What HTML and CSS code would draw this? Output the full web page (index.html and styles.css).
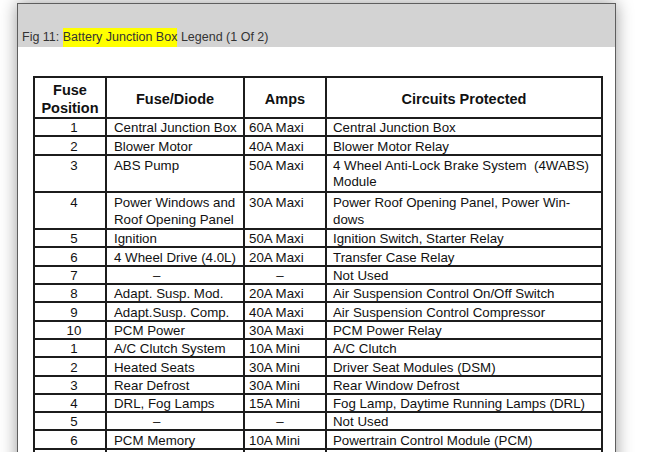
FILE: index.html
```html
<!DOCTYPE html>
<html>
<head>
<meta charset="utf-8">
<link rel="stylesheet" href="styles.css">
</head>
<body>
<div class="panel">
  <div class="caption"><span class="cap-text">Fig 11: <span class="hl">Battery Junction Box</span> Legend (1 Of 2)</span></div>
  <div class="content">
    <table class="legend">
      <colgroup>
        <col class="c-pos"><col class="c-fuse"><col class="c-amps"><col class="c-circ">
      </colgroup>
      <thead>
        <tr><th>Fuse<br>Position</th><th>Fuse/Diode</th><th>Amps</th><th>Circuits Protected</th></tr>
      </thead>
      <tbody>
        <tr><td class="pos">1</td><td class="fuse">Central Junction Box</td><td class="amps">60A Maxi</td><td class="circ">Central Junction Box</td></tr>
        <tr><td class="pos">2</td><td class="fuse">Blower Motor</td><td class="amps">40A Maxi</td><td class="circ">Blower Motor Relay</td></tr>
        <tr class="two"><td class="pos">3</td><td class="fuse">ABS Pump</td><td class="amps">50A Maxi</td><td class="circ">4 Wheel Anti-Lock Brake System &nbsp;(4WABS)<br>Module</td></tr>
        <tr class="two"><td class="pos">4</td><td class="fuse">Power Windows and<br>Roof Opening Panel</td><td class="amps">30A Maxi</td><td class="circ">Power Roof Opening Panel, Power Win-<br>dows</td></tr>
        <tr><td class="pos">5</td><td class="fuse">Ignition</td><td class="amps">50A Maxi</td><td class="circ">Ignition Switch, Starter Relay</td></tr>
        <tr><td class="pos">6</td><td class="fuse">4 Wheel Drive (4.0L)</td><td class="amps">20A Maxi</td><td class="circ">Transfer Case Relay</td></tr>
        <tr><td class="pos">7</td><td class="fuse dash-f">–</td><td class="amps dash-a">–</td><td class="circ">Not Used</td></tr>
        <tr><td class="pos">8</td><td class="fuse">Adapt. Susp. Mod.</td><td class="amps">20A Maxi</td><td class="circ">Air Suspension Control On/Off Switch</td></tr>
        <tr><td class="pos">9</td><td class="fuse">Adapt.Susp. Comp.</td><td class="amps">40A Maxi</td><td class="circ">Air Suspension Control Compressor</td></tr>
        <tr><td class="pos">10</td><td class="fuse">PCM Power</td><td class="amps">30A Maxi</td><td class="circ">PCM Power Relay</td></tr>
        <tr><td class="pos">1</td><td class="fuse">A/C Clutch System</td><td class="amps">10A Mini</td><td class="circ">A/C Clutch</td></tr>
        <tr><td class="pos">2</td><td class="fuse">Heated Seats</td><td class="amps">30A Mini</td><td class="circ">Driver Seat Modules (DSM)</td></tr>
        <tr><td class="pos">3</td><td class="fuse">Rear Defrost</td><td class="amps">30A Mini</td><td class="circ">Rear Window Defrost</td></tr>
        <tr><td class="pos">4</td><td class="fuse">DRL, Fog Lamps</td><td class="amps">15A Mini</td><td class="circ">Fog Lamp, Daytime Running Lamps (DRL)</td></tr>
        <tr><td class="pos">5</td><td class="fuse dash-f">–</td><td class="amps dash-a">–</td><td class="circ">Not Used</td></tr>
        <tr><td class="pos">6</td><td class="fuse">PCM Memory</td><td class="amps">10A Mini</td><td class="circ">Powertrain Control Module (PCM)</td></tr>
        <tr class="blank"><td class="pos"></td><td class="fuse"></td><td class="amps"></td><td class="circ"></td></tr>
      </tbody>
    </table>
  </div>
</div>
</body>
</html>
```
FILE: styles.css
```css
html, body {
  margin: 0;
  padding: 0;
  background: #ffffff;
  overflow: hidden;
  height: 452px;
}

.panel {
  margin: 3px 0 0 17px;
  width: 597px;
  height: 600px;
  border: 1px solid #5e5e5e;
  background: #ffffff;
  box-shadow: 0 0 16px rgba(0, 0, 0, 0.4);
}

.caption {
  height: 43px;
  background: #d3d3d3;
  display: flex;
  align-items: flex-end;
  padding-left: 4px;
}

.cap-text {
  font-family: "Liberation Sans", Arial, sans-serif;
  font-size: 12.5px;
  line-height: 19px;
  color: #333333;
  white-space: nowrap;
}

.hl {
  background: #ffff00;
  display: inline-block;
}

.content {
  padding: 29px 0 0 15px;
}

.legend {
  border-collapse: collapse;
  table-layout: fixed;
  width: 568px;
  font-family: "Liberation Sans", Arial, sans-serif;
  color: #111111;
}

.c-pos { width: 72px; }
.c-fuse { width: 138px; }
.c-amps { width: 82px; }
.c-circ { width: 276px; }

.legend th,
.legend td {
  border: 2px solid #1c1c1c;
  white-space: nowrap;
  overflow: hidden;
}

.legend th {
  font-size: 14.5px;
  font-weight: bold;
  line-height: 18px;
  padding: 3px 0 0;
  height: 36px;
  text-align: center;
  vertical-align: middle;
}

.legend td {
  font-size: 13.3px;
  line-height: 14px;
  padding: 2.3px 0 0;
  vertical-align: top;
}

.legend tr.two td {
  line-height: 16.5px;
}

.legend tr.blank td {
  height: 14px;
}

.pos {
  text-align: center;
  padding-left: 8px !important;
}

.fuse {
  padding-left: 7px !important;
}

.amps {
  padding-left: 4px !important;
}

.circ {
  padding-left: 6px !important;
}

.dash-f {
  padding-left: 46px !important;
}

.dash-a {
  text-align: center;
  padding-right: 14px !important;
}
```
